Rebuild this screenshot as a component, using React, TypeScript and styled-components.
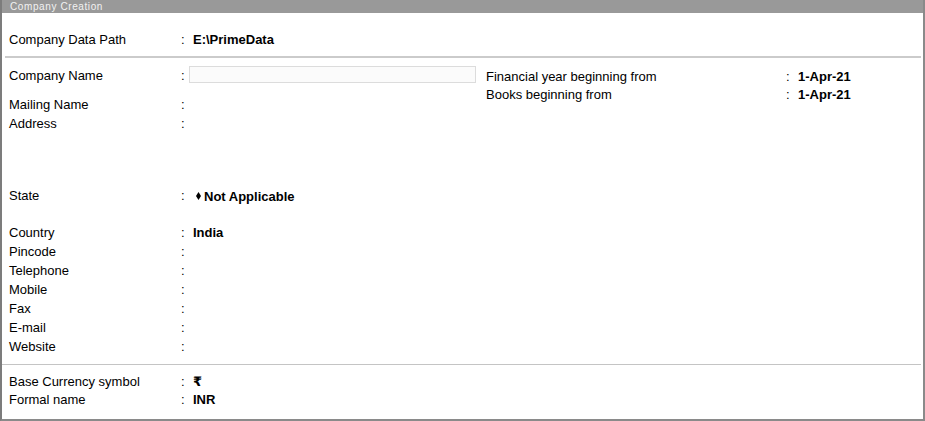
import React from "react";
import styled, { createGlobalStyle } from "styled-components";

const GlobalStyle = createGlobalStyle`
  html, body {
    margin: 0;
    padding: 0;
    background: #ffffff;
  }
  body {
    font-family: "Liberation Sans", Arial, "DejaVu Sans", sans-serif;
    font-size: 13px;
    color: #000000;
  }
`;

interface FieldProps {
  label: string;
  value?: React.ReactNode;
  top?: number;
  pitch?: number;
}

function Field({ label, value, top = 0, pitch = 19 }: FieldProps) {
  return (
    <Row $top={top} $pitch={pitch}>
      <Label>{label}</Label>
      <Colon>:</Colon>
      <Value>{value}</Value>
    </Row>
  );
}

function Diamond() {
  return (
    <svg width="5" height="8" viewBox="0 0 5 8" aria-hidden="true">
      <polygon points="2.5,0 5,4 2.5,8 0,4" fill="#000" />
    </svg>
  );
}

export default function App() {
  return (
    <>
      <GlobalStyle />
      <Frame>
        <TitleBar>Company Creation</TitleBar>

        <Field label="Company Data Path" top={17} value="E:\PrimeData" />

        <Separator $thick={2} $inset={3} $top={7} />

        <Columns>
          <LeftCol>
            <Row $top={0} $pitch={20}>
              <Label>Company Name</Label>
              <Colon>:</Colon>
              <NameInput />
            </Row>
            <Field label="Mailing Name" top={10} pitch={18} />
            <Field label="Address" />
            <Field
              label="State"
              top={53}
              value={
                <StateValue>
                  <Diamond />
                  Not Applicable
                </StateValue>
              }
            />
            <Field label="Country" top={18} value="India" />
            <Field label="Pincode" />
            <Field label="Telephone" />
            <Field label="Mobile" />
            <Field label="Fax" />
            <Field label="E-mail" />
            <Field label="Website" />
          </LeftCol>

          <RightCol>
            <DateRow>
              <DateLabel>Financial year beginning from</DateLabel>
              <Colon>:</Colon>
              <Value>1-Apr-21</Value>
            </DateRow>
            <DateRow>
              <DateLabel>Books beginning from</DateLabel>
              <Colon>:</Colon>
              <Value>1-Apr-21</Value>
            </DateRow>
          </RightCol>
        </Columns>

        <Separator $thick={1} $inset={0} $top={8} $light />

        <Field label="Base Currency symbol" top={8} pitch={18} value="₹" />
        <Field label="Formal name" pitch={18} value="INR" />
      </Frame>
    </>
  );
}

const Frame = styled.div`
  box-sizing: border-box;
  width: 925px;
  height: 421px;
  overflow: hidden;
  border-left: 2px solid #7c7c7c;
  border-right: 2px solid #8a8a8a;
  border-bottom: 2px solid #8a8a8a;
  background: #ffffff;
`;

const TitleBar = styled.div`
  height: 13px;
  line-height: 13px;
  margin-left: -2px;
  margin-right: -2px;
  padding-left: 10px;
  background: #999999;
  color: #f2f2f2;
  font-size: 10px;
  letter-spacing: 0.6px;
`;

const Row = styled.div<{ $top: number; $pitch: number }>`
  display: flex;
  align-items: flex-start;
  height: ${({ $pitch }) => $pitch}px;
  line-height: ${({ $pitch }) => $pitch}px;
  margin-top: ${({ $top }) => $top}px;
  padding-left: 7px;
  white-space: nowrap;
`;

const Label = styled.div`
  width: 172px;
  flex: none;
`;

const Colon = styled.div`
  width: 12px;
  flex: none;
`;

const Value = styled.div`
  font-weight: bold;
`;

const StateValue = styled.span`
  display: inline-flex;
  align-items: center;
  gap: 3px;
  padding-left: 3px;
`;

const NameInput = styled.div`
  box-sizing: border-box;
  width: 287px;
  height: 17px;
  margin-left: -4px;
  border: 1px solid #dcdcdc;
  background: #fbfbfb;
`;

const Separator = styled.div<{
  $thick: number;
  $inset: number;
  $top: number;
  $light?: boolean;
}>`
  height: ${({ $thick }) => $thick}px;
  margin: ${({ $top }) => $top}px 2px 0 ${({ $inset }) => $inset}px;
  background: ${({ $light }) => ($light ? "#c4c4c4" : "#cbcbcb")};
`;

const Columns = styled.div`
  display: flex;
  margin-top: 8px;
`;

const LeftCol = styled.div`
  width: 477px;
  flex: none;
`;

const RightCol = styled.div`
  flex: 1;
  padding-top: 2px;
  padding-left: 7px;
`;

const DateRow = styled.div`
  display: flex;
  height: 18px;
  line-height: 18px;
  white-space: nowrap;
`;

const DateLabel = styled.div`
  width: 300px;
  flex: none;
`;
